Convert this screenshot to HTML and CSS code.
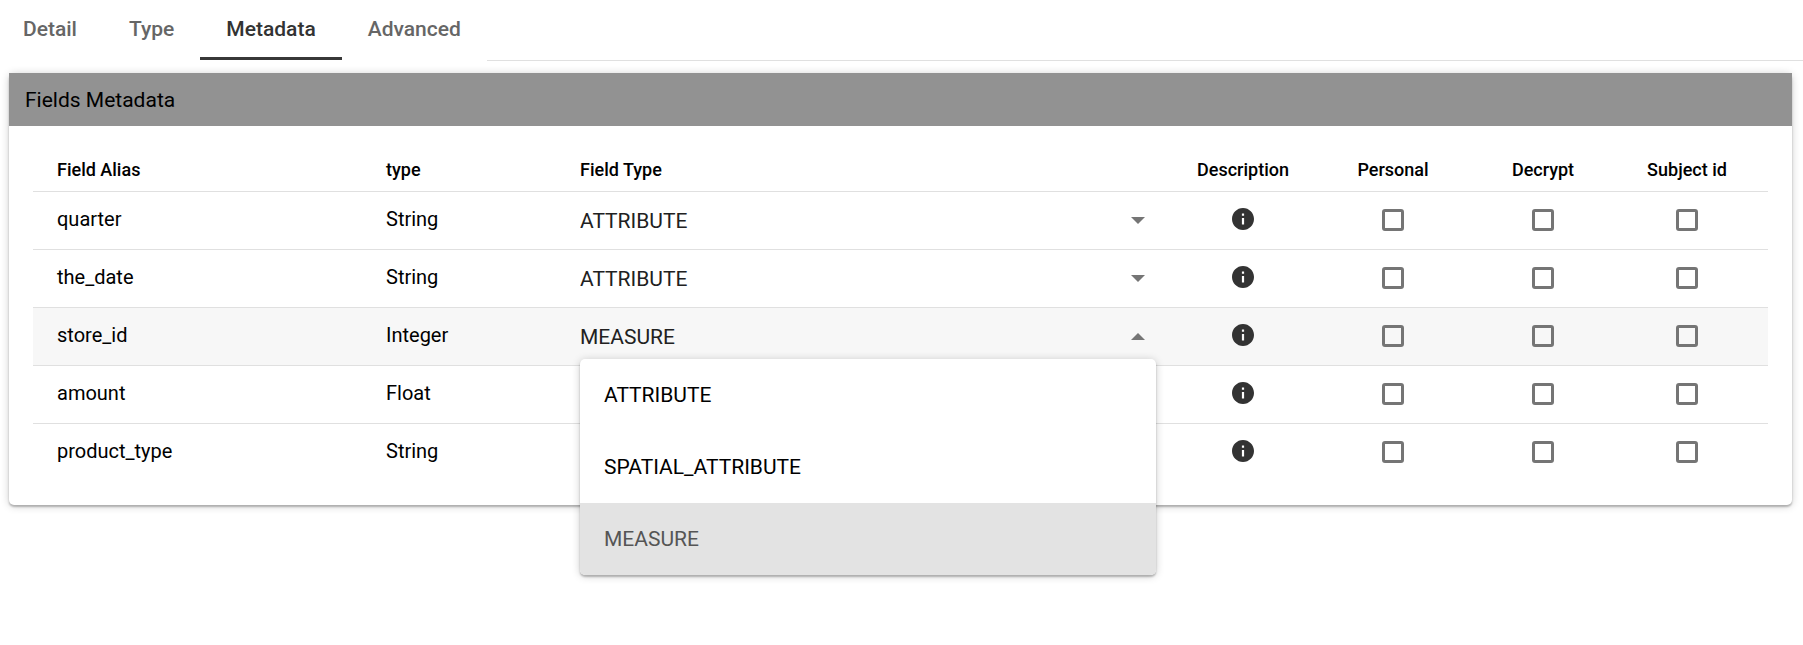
FILE: index.html
```html
<!DOCTYPE html>
<html lang="en">
<head>
<meta charset="utf-8">
<meta name="viewport" content="width=device-width, initial-scale=1">
<title>Fields Metadata</title>
<link rel="stylesheet" href="styles.css">
</head>
<body>
<nav class="tabs" role="tablist">
  <button class="tab" type="button" role="tab">Detail</button>
  <button class="tab" type="button" role="tab">Type</button>
  <button class="tab tab-active" type="button" role="tab" aria-selected="true">Metadata</button>
  <button class="tab" type="button" role="tab">Advanced</button>
  <div class="tabs-rule"></div>
</nav>
<main class="card">
  <header class="card-header"><h1 class="card-title">Fields Metadata</h1></header>
  <div class="card-body">
    <svg class="symbols" aria-hidden="true">
      <symbol id="info" viewBox="2 2 20 20"><path d="M12 2C6.480 2 2 6.480 2 12s4.480 10 10 10 10-4.480 10-10S17.520 2 12 2zm1 15h-2v-6h2v6zm0-8h-2V7h2v2z"/></symbol>
    </svg>
    <table class="fields">
      <colgroup>
        <col class="col-alias"><col class="col-type"><col>
        <col class="col-flag"><col class="col-flag"><col class="col-flag"><col class="col-flag">
      </colgroup>
      <thead>
        <tr>
          <th scope="col">Field Alias</th>
          <th scope="col">type</th>
          <th scope="col">Field Type</th>
          <th class="flag" scope="col">Description</th>
          <th class="flag" scope="col">Personal</th>
          <th class="flag" scope="col">Decrypt</th>
          <th class="flag flag-last" scope="col">Subject id</th>
        </tr>
      </thead>
      <tbody>
        <tr>
          <td>quarter</td>
          <td>String</td>
          <td class="kind"><div class="picker"><select class="select" aria-label="Field type of quarter"><option selected>ATTRIBUTE</option><option>SPATIAL_ATTRIBUTE</option><option>MEASURE</option></select></div></td>
          <td class="flag"><button class="info" type="button" aria-label="Description of quarter"><svg class="info-icon"><use href="#info"/></svg></button></td>
          <td class="flag"><input class="check" type="checkbox" aria-label="quarter: Personal"></td>
          <td class="flag"><input class="check" type="checkbox" aria-label="quarter: Decrypt"></td>
          <td class="flag flag-last"><input class="check" type="checkbox" aria-label="quarter: Subject id"></td>
        </tr>
        <tr>
          <td>the_date</td>
          <td>String</td>
          <td class="kind"><div class="picker"><select class="select" aria-label="Field type of the_date"><option selected>ATTRIBUTE</option><option>SPATIAL_ATTRIBUTE</option><option>MEASURE</option></select></div></td>
          <td class="flag"><button class="info" type="button" aria-label="Description of the_date"><svg class="info-icon"><use href="#info"/></svg></button></td>
          <td class="flag"><input class="check" type="checkbox" aria-label="the_date: Personal"></td>
          <td class="flag"><input class="check" type="checkbox" aria-label="the_date: Decrypt"></td>
          <td class="flag flag-last"><input class="check" type="checkbox" aria-label="the_date: Subject id"></td>
        </tr>
        <tr class="row-active">
          <td>store_id</td>
          <td>Integer</td>
          <td class="kind">
            <div class="picker picker-open">
              <select class="select" aria-label="Field type of store_id"><option>ATTRIBUTE</option><option>SPATIAL_ATTRIBUTE</option><option selected>MEASURE</option></select>
              <div class="menu" role="listbox" aria-label="Field type">
                <button class="menu-item" type="button" role="option">ATTRIBUTE</button>
                <button class="menu-item" type="button" role="option">SPATIAL_ATTRIBUTE</button>
                <button class="menu-item menu-item-selected" type="button" role="option" aria-selected="true">MEASURE</button>
              </div>
            </div>
          </td>
          <td class="flag"><button class="info" type="button" aria-label="Description of store_id"><svg class="info-icon"><use href="#info"/></svg></button></td>
          <td class="flag"><input class="check" type="checkbox" aria-label="store_id: Personal"></td>
          <td class="flag"><input class="check" type="checkbox" aria-label="store_id: Decrypt"></td>
          <td class="flag flag-last"><input class="check" type="checkbox" aria-label="store_id: Subject id"></td>
        </tr>
        <tr>
          <td>amount</td>
          <td>Float</td>
          <td></td>
          <td class="flag"><button class="info" type="button" aria-label="Description of amount"><svg class="info-icon"><use href="#info"/></svg></button></td>
          <td class="flag"><input class="check" type="checkbox" aria-label="amount: Personal"></td>
          <td class="flag"><input class="check" type="checkbox" aria-label="amount: Decrypt"></td>
          <td class="flag flag-last"><input class="check" type="checkbox" aria-label="amount: Subject id"></td>
        </tr>
        <tr>
          <td>product_type</td>
          <td>String</td>
          <td></td>
          <td class="flag"><button class="info" type="button" aria-label="Description of product_type"><svg class="info-icon"><use href="#info"/></svg></button></td>
          <td class="flag"><input class="check" type="checkbox" aria-label="product_type: Personal"></td>
          <td class="flag"><input class="check" type="checkbox" aria-label="product_type: Decrypt"></td>
          <td class="flag flag-last"><input class="check" type="checkbox" aria-label="product_type: Subject id"></td>
        </tr>
      </tbody>
    </table>
  </div>
</main>
</body>
</html>
```

FILE: styles.css
```css
* {
  box-sizing: border-box;
}

body {
  min-height: 100vh;
  margin: 0;
  background: #fff;
  color: #000;
  font-family: Roboto, "Liberation Sans", sans-serif;
  font-size: 20px;
}

button,
select,
input {
  margin: 0;
  padding: 0;
  border: 0;
  border-radius: 0;
  background: transparent;
  color: inherit;
  font: inherit;
}

/* Tabs */
.tabs {
  display: flex;
}

.tab {
  padding: 17px 26px 16px;
  border-bottom: 3px solid transparent;
  color: #666;
  font-size: 21px;
  font-weight: 500;
  line-height: 24px;
}

.tab:first-child {
  padding-left: 23px;
}

.tab-active {
  border-bottom-color: #383838;
  color: #333;
}

.tabs-rule {
  flex: 1;
  margin-bottom: -1px;
  border-bottom: 1px solid #e0e0e0;
}

/* Card */
.card {
  margin: 13px 11px 24px 9px;
  border-radius: 5px;
  background: #fff;
  box-shadow: 0 1px 8px rgba(0, 0, 0, 0.2), 0 2px 2px rgba(0, 0, 0, 0.24);
}

.card-header {
  padding: 15px 16px 13px;
  background: #929292;
}

.card-title {
  margin: 0;
  font-size: 21px;
  font-weight: 400;
  line-height: 25px;
}

.card-body {
  padding: 24px;
}

.symbols {
  display: none;
}

/* Fields table */
.fields {
  width: 100%;
  border-collapse: separate;
  border-spacing: 0;
  table-layout: fixed;
}

.col-alias {
  width: 329px;
}

.col-type {
  width: 194px;
}

.col-flag {
  width: 150px;
}

.fields th {
  height: 41px;
  padding: 0 0 2px 24px;
  font-size: 18px;
  font-weight: 500;
  text-align: left;
}

.fields td {
  height: 58px;
  padding: 0 0 4px 24px;
  border-top: 1px solid #e0e0e0;
}

.fields .kind {
  padding: 0 12px 0 24px;
}

.fields .flag {
  padding-left: 0;
  text-align: center;
}

.fields .flag-last {
  padding-right: 12px;
}

.row-active {
  background: #f7f7f7;
}

.info {
  display: block;
  width: 22px;
  height: 22px;
  margin: 0 auto;
}

.info-icon {
  display: block;
  width: 22px;
  height: 22px;
  fill: #333;
}

.check {
  display: block;
  width: 22px;
  height: 22px;
  margin: 2px auto 0;
  border: 3px solid #757575;
  border-radius: 3px;
  appearance: none;
}

/* Field type drop-down */
.picker {
  position: relative;
  display: flex;
  align-items: center;
  color: #212121;
}

.select {
  flex: 1;
  height: 50px;
  font-size: 21px;
  appearance: none;
}

.picker::after {
  position: absolute;
  right: 11px;
  border: 7px solid transparent;
  border-top-color: #757575;
  border-bottom-width: 0;
  content: "";
  pointer-events: none;
}

.picker-open::after {
  border-top-width: 0;
  border-bottom: 7px solid #757575;
}

.menu {
  position: absolute;
  z-index: 1;
  top: 47px;
  right: 0;
  left: 0;
  overflow: hidden;
  border-radius: 5px;
  background: #fff;
  box-shadow: 0 1px 8px rgba(0, 0, 0, 0.2), 0 2px 2px rgba(0, 0, 0, 0.24);
}

.menu-item {
  display: block;
  width: 100%;
  height: 72px;
  padding: 0 24px;
  color: #000;
  font-size: 21px;
  text-align: left;
}

.menu-item-selected {
  background: #e3e3e3;
  color: #555;
}
```
